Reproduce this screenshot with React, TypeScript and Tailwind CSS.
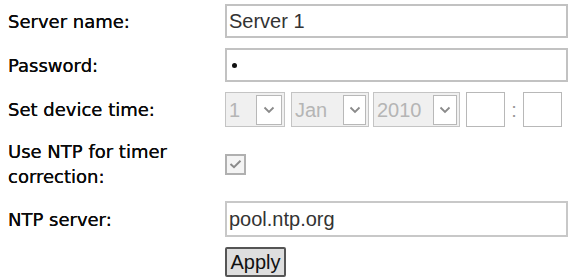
import React from "react";

function Chevron() {
  return (
    <svg width="12" height="8" viewBox="0 0 12 8" className="block">
      <path d="M1.5 1.5 L6 6 L10.5 1.5" fill="none" stroke="#8a8a8a" strokeWidth="1.8" />
    </svg>
  );
}

function FakeSelect({ value, width, arrowW }: { value: string; width: string; arrowW: string }) {
  return (
    <div className={`${width} h-[35px] border border-[#c4c4c4] bg-[#f0f0f0] flex items-center justify-between pl-[3px] pr-[2px]`}>
      <span className="text-[#b5b5b5] text-[20px] font-['Liberation_Sans',Arial,sans-serif] leading-none">{value}</span>
      <div className={`${arrowW} h-[30px] bg-white border border-[#b8b8b8] flex items-center justify-center`}>
        <Chevron />
      </div>
    </div>
  );
}

export default function App() {
  const label = "text-[18px] text-[#0a0a0a] font-['DejaVu_Sans',Verdana,sans-serif] leading-[25px] [text-shadow:0_0_0.6px_#000]";
  return (
    <div className="w-[573px] h-[279px] bg-white overflow-hidden pt-[4px] pl-[8px]">
      <div className="grid grid-cols-[217px_343px] grid-rows-[34px_34px_35px_54px_36px_30px] gap-y-[10px] items-center">
        <div className={label}>Server name:</div>
        <div className="h-[34px] border-2 border-[#c2c2c2] bg-white flex items-center pl-[2px] text-[20px] text-[#333] font-['Liberation_Sans',Arial,sans-serif]">
          Server 1
        </div>

        <div className={label}>Password:</div>
        <div className="h-[34px] border-2 border-[#c2c2c2] bg-white flex items-center pl-[5px]">
          <span className="w-[5px] h-[5px] rounded-full bg-[#111]" />
        </div>

        <div className={label}>Set device time:</div>
        <div className="flex items-center">
          <FakeSelect value="1" width="w-[60px]" arrowW="w-[26px]" />
          <div className="w-[6px]" />
          <FakeSelect value="Jan" width="w-[78px]" arrowW="w-[23px]" />
          <div className="w-[4px]" />
          <FakeSelect value="2010" width="w-[87px]" arrowW="w-[24px]" />
          <div className="w-[6px]" />
          <div className="w-[39px] h-[35px] border border-[#b8b8b8] bg-white" />
          <div className="w-[18px] text-center text-[#999] text-[20px] font-['Liberation_Sans',Arial,sans-serif]">:</div>
          <div className="w-[39px] h-[35px] border border-[#b8b8b8] bg-white" />
        </div>

        <div className={`${label} w-[200px]`}>Use NTP for timer correction:</div>
        <div>
          <div className="w-[21px] h-[21px] border-2 border-[#b0b0b0] bg-[#f4f4f4] flex items-center justify-center">
            <svg width="13" height="10" viewBox="0 0 13 10">
              <path d="M1.5 5 L5 8.2 L11.5 1.8" fill="none" stroke="#8a8a8a" strokeWidth="2" />
            </svg>
          </div>
        </div>

        <div className={label}>NTP server:</div>
        <div className="h-[36px] border-2 border-[#c8c8c8] bg-white flex items-center pl-[2px] text-[20px] text-[#333] font-['Liberation_Sans',Arial,sans-serif]">
          pool.ntp.org
        </div>

        <div />
        <div>
          <div className="w-[61px] h-[30px] border-2 border-[#555] rounded-[2px] bg-[#dedede] flex items-center justify-center text-[20px] text-[#111] font-['Liberation_Sans',Arial,sans-serif]">
            Apply
          </div>
        </div>
      </div>
    </div>
  );
}
